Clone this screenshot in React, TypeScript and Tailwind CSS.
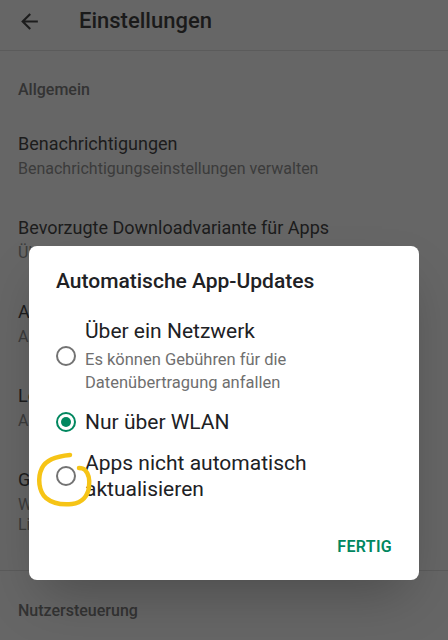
const font = { fontFamily: 'Roboto, "Noto Sans", sans-serif' };

type Item = { title: string; lines: string[] };

const items: Item[] = [
  { title: 'Benachrichtigungen', lines: ['Benachrichtigungseinstellungen verwalten'] },
  { title: 'Bevorzugte Downloadvariante für Apps', lines: ['Über ein beliebiges Netzwerk'] },
  { title: 'Automatische App-Updates', lines: ['Apps nur über WLAN automatisch aktualisieren'] },
  { title: 'Lokalen Suchverlauf löschen', lines: ['Alle Suchanfragen auf diesem Gerät entfernen'] },
  { title: 'Gerätedesign', lines: ['Wähle aus, wie die App angezeigt werden soll,', 'Licht oder dunkel'] },
];

function Radio({ checked }: { checked?: boolean }) {
  return (
    <div
      className={
        checked
          ? 'w-[20px] h-[20px] shrink-0 rounded-full border-2 border-[#01875f] flex items-center justify-center'
          : 'w-[20px] h-[20px] shrink-0 rounded-full border-2 border-[#737373]'
      }
    >
      {checked && <div className="w-[10px] h-[10px] rounded-full bg-[#01875f]" />}
    </div>
  );
}

export default function App() {
  return (
    <div className="relative w-[448px] h-[640px] overflow-hidden bg-[#666666]" style={font}>
      {/* header */}
      <div className="h-[51px] border-b border-[#5b5b5b]">
        <div className="flex items-center h-[42px]">
          <svg className="w-[25px] h-[25px] ml-[17px] text-[#1c1c1c]" viewBox="0 0 24 24" fill="currentColor">
            <path d="M20 11H7.83l5.59-5.59L12 4l-8 8 8 8 1.41-1.41L7.83 13H20v-2z" />
          </svg>
          <span className="ml-[37px] text-[22px] font-medium text-[#1a1a1a] leading-[28px]">Einstellungen</span>
        </div>
      </div>

      {/* list behind dialog */}
      <div className="px-[18px]">
        <div className="pt-[29px] text-[16px] leading-[20px] font-medium text-[#333333]">Allgemein</div>
        {items.map((it) => (
          <div key={it.title} className="pt-[32px] pb-[5px]">
            <div className="text-[18px] leading-[24px] text-[#1c1c1c] whitespace-nowrap">{it.title}</div>
            <div className="mt-[3px]">
              {it.lines.map((l) => (
                <div key={l} className="text-[16px] leading-[20px] text-[#3b3b3b] whitespace-nowrap">
                  {l}
                </div>
              ))}
            </div>
          </div>
        ))}
      </div>
      <div className="mt-[30px] border-t border-[#5b5b5b]" />
      <div className="px-[18px] pt-[30px] text-[16px] leading-[20px] font-medium text-[#333333]">Nutzersteuerung</div>

      {/* dialog */}
      <div className="absolute left-[29px] top-[246px] w-[390px] h-[334px] bg-white rounded-[8px] shadow-2xl px-[27px] pt-[21px]">
        <div className="text-[21px] leading-[28px] font-medium text-[#202124]">Automatische App-Updates</div>

        <div className="mt-[22px] flex items-center gap-[9px]">
          <Radio />
          <div>
            <div className="text-[21px] leading-[28px] text-[#202124]">Über ein Netzwerk</div>
            <div className="mt-[3px] text-[16.5px] leading-[23px] text-[#6f6f6f]">
              Es können Gebühren für die
              <br />
              Datenübertragung anfallen
            </div>
          </div>
        </div>

        <div className="mt-[14px] flex items-center gap-[9px]">
          <Radio checked />
          <div className="text-[21px] leading-[28px] text-[#202124]">Nur über WLAN</div>
        </div>

        <div className="mt-[14px] flex items-center gap-[9px]">
          <Radio />
          <div className="text-[21px] leading-[26px] text-[#202124]">
            Apps nicht automatisch
            <br />
            aktualisieren
          </div>
        </div>

        <div className="mt-[35px] flex justify-end">
          <span className="text-[16px] leading-[20px] font-semibold tracking-[0.3px] text-[#01875f]">FERTIG</span>
        </div>
      </div>

      {/* hand drawn mark */}
      <svg className="absolute left-0 top-0 w-[448px] h-[640px] pointer-events-none" viewBox="0 0 448 640">
        <path
          d="M70 455 C58 456 46 460 42 468 C37 478 39 492 46 498 C52 503 62 505 72 504 C82 503 88 496 89 487 C90 479 88 473 85 470 C83 468 81 468 79 468"
          fill="none"
          stroke="#f6c416"
          strokeWidth="4.5"
          strokeLinecap="round"
        />
      </svg>
    </div>
  );
}
